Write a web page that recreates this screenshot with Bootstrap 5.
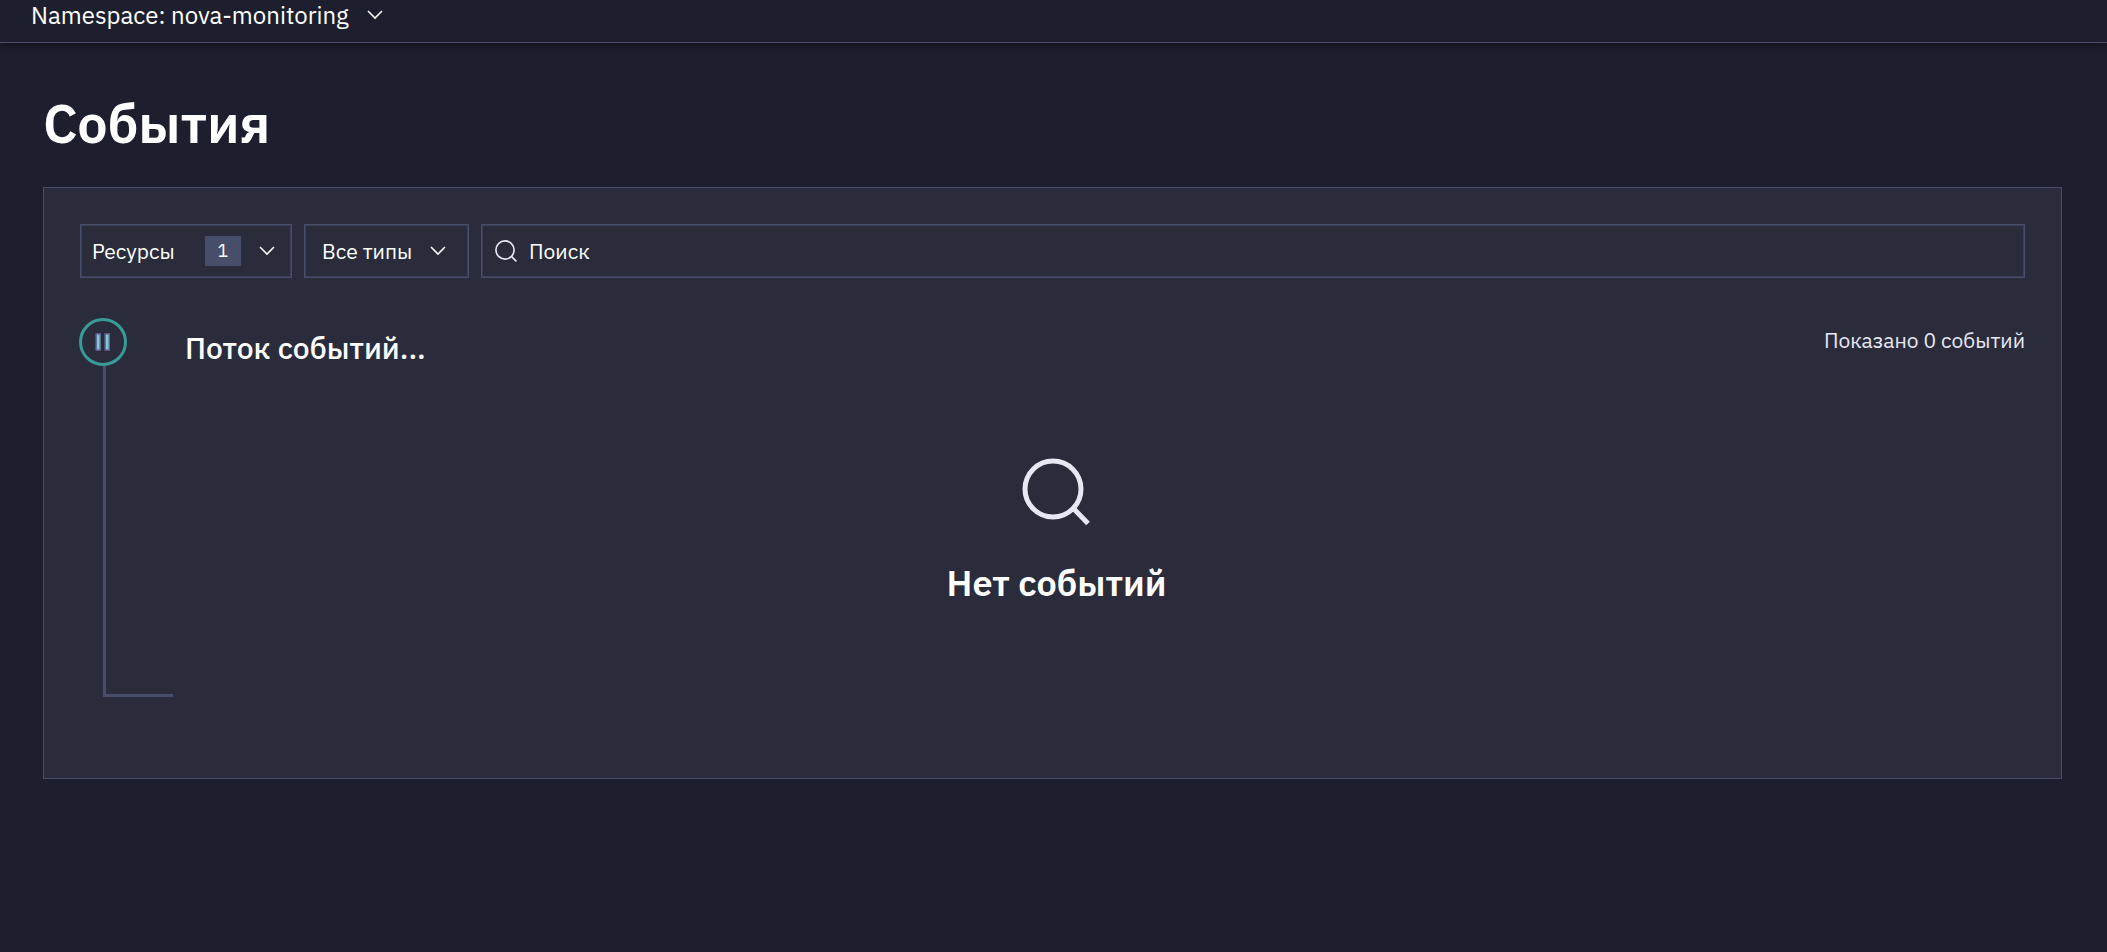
<!DOCTYPE html>
<html lang="ru" data-bs-theme="dark">
<head>
<meta charset="utf-8">
<meta name="viewport" content="width=device-width, initial-scale=1">
<title>События</title>
<link href="https://cdn.jsdelivr.net/npm/bootstrap@5.3.0/dist/css/bootstrap.min.css" rel="stylesheet">
<style>
  :root { --page: #1e1f2e; --panel: #2b2c3b; --line: #474e6a; --teal: #379c96; }
  body { background: var(--page); color: #fff; font-family: "IBM Plex Sans", "Noto Sans", sans-serif; font-size: 21px; line-height: 32px; }
  svg { display: block; flex: none; fill: none; stroke: currentColor; }
  .btn { --bs-btn-color: #fff; --bs-btn-border-radius: 0; --bs-btn-border-width: 0; --bs-btn-font-size: 21px; --bs-btn-line-height: 32px; --bs-btn-hover-color: #fff; }
  .topbar { height: 43px; padding: 0 31px; border-bottom: 1px solid var(--line); box-shadow: 0 2px 6px #10111b; }
  .topbar .btn { --bs-btn-font-size: 24px; --bs-btn-line-height: 30px; gap: 18px; }
  .content { padding: 42px 45px 40px 43px; }
  h1 { font-size: 54px; line-height: 76px; font-weight: 600; margin: 0 0 26px; }
  .panel { background: var(--panel); border: 1px solid var(--line); padding: 36px 36px 81px; }
  .field { height: 54px; border: 1px solid var(--line); border-radius: 0; box-shadow: inset 0 0 0 1px #3b4057; }
  .filters { gap: 12px; }
  .filters .btn { --bs-btn-border-width: 1px; --bs-btn-border-color: var(--line); --bs-btn-hover-border-color: var(--teal); --bs-btn-padding-y: 0; }
  .filters .resources { padding: 0 16px 0 11px; width: 212px; }
  .filters .types { padding: 0 22px 0 17px; width: 165px; }
  .count { background: var(--line); width: 36px; height: 30px; font-size: 18px; margin-right: 18px; }
  .search { padding: 0 13px; gap: 12px; }
  .search svg { color: #e6e8f3; }
  .search input { background: transparent; border: 0; outline: 0; color: #fff; padding: 0; min-width: 0; }
  .search input::placeholder { color: #fff; opacity: 1; }
  .stream { margin: 40px 0 0 -1px; }
  .rail { width: 94px; flex: none; }
  .pause { width: 48px; height: 48px; padding: 0; border: 3px solid var(--teal); border-radius: 50%; background: transparent; }
  .pause svg { fill: #78cfcc; stroke: #646b9c; }
  .track { flex: 1; margin-left: 24px; border: solid var(--line); border-width: 0 0 3px 3px; }
  .events { min-height: 379px; }
  h2 { font-size: 30px; line-height: 40px; font-weight: 500; margin: 10px 0 0 12px; }
  .shown { color: #e6e8f3; margin-top: 6px; }
  .empty { margin: 90px 85px 0 0; color: #e6e8f3; gap: 32px; }
  h3 { color: #fff; font-size: 36px; line-height: 50px; font-weight: 600; margin: 0; }
</style>
</head>
<body>
<header class="topbar d-flex align-items-start">
  <button type="button" class="btn d-flex align-items-center p-0">Namespace: nova-monitoring
    <svg width="16" height="10" viewBox="0 0 16 10" stroke-width="1.6"><path d="M1 1l7 7 7-7"/></svg>
  </button>
</header>
<main class="content">
  <h1>События</h1>
  <section class="panel">
    <div class="filters d-flex">
      <button type="button" class="btn field resources d-flex align-items-center">Ресурсы
        <span class="count d-flex align-items-center justify-content-center ms-auto">1</span>
        <svg width="16" height="10" viewBox="0 0 16 10" stroke-width="1.6"><path d="M1 1l7 7 7-7"/></svg>
      </button>
      <button type="button" class="btn field types d-flex align-items-center justify-content-between">Все типы
        <svg width="16" height="10" viewBox="0 0 16 10" stroke-width="1.6"><path d="M1 1l7 7 7-7"/></svg>
      </button>
      <label class="field search d-flex align-items-center flex-grow-1">
        <svg width="22" height="22" viewBox="0 0 22 22" stroke-width="1.6"><circle cx="10" cy="10" r="9.1"/><path d="M16.4 16.4l5 5"/></svg>
        <input type="search" class="flex-grow-1" placeholder="Поиск" aria-label="Поиск">
      </label>
    </div>
    <div class="stream d-flex">
      <div class="rail d-flex flex-column">
        <button type="button" class="pause d-flex align-items-center justify-content-center" aria-label="Приостановить">
          <svg width="16" height="18" viewBox="0 0 16 18" stroke-width="1.5"><path d="M1.2 1h4v16h-4zM10.2 1h4v16h-4z"/></svg>
        </button>
        <div class="track"></div>
      </div>
      <div class="events flex-grow-1">
        <div class="d-flex justify-content-between align-items-start">
          <h2>Поток событий...</h2>
          <div class="shown">Показано 0 событий</div>
        </div>
        <div class="empty d-flex flex-column align-items-center">
          <svg width="70" height="68" viewBox="0 0 70 68" stroke-width="5"><circle cx="31" cy="31" r="28"/><path d="M51 50l15 15.5"/></svg>
          <h3>Нет событий</h3>
        </div>
      </div>
    </div>
  </section>
</main>
<script src="https://cdn.jsdelivr.net/npm/bootstrap@5.3.0/dist/js/bootstrap.bundle.min.js"></script>
</body>
</html>
